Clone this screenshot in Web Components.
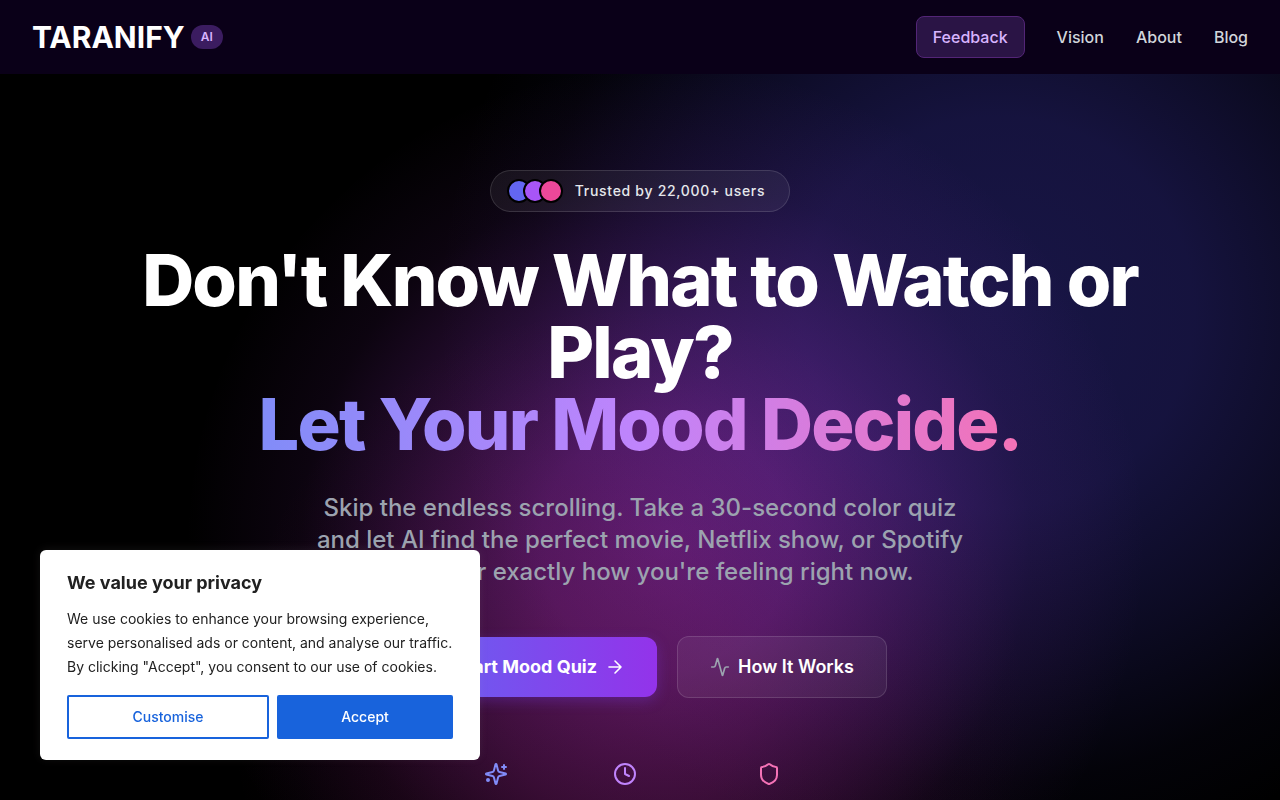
<!DOCTYPE html>
<html lang="en">
<head>
<meta charset="utf-8">
<meta name="viewport" content="width=device-width, initial-scale=1">
<title>Taranify</title>
<style>
  body {
    margin: 0;
    background: #000;
    color: #fff;
    font-family: Inter, "Liberation Sans", sans-serif;
  }
</style>
</head>
<body>
<taranify-page>
  <site-header slot="header">
    <nav-link href="#feedback" highlight>Feedback</nav-link>
    <nav-link href="#vision">Vision</nav-link>
    <nav-link href="#about">About</nav-link>
    <nav-link href="#blog">Blog</nav-link>
  </site-header>
  <hero-section>
    <trust-badge slot="badge">Trusted by 22,000+ users</trust-badge>
    <span slot="title">Don't Know What to Watch or Play?</span>
    <span slot="accent">Let Your Mood Decide.</span>
    <span slot="lead">Skip the endless scrolling. Take a 30-second color quiz and let AI find the perfect movie, Netflix show, or Spotify playlist for exactly how you're feeling right now.</span>
    <cta-button slot="actions" primary>Start Mood Quiz</cta-button>
    <cta-button slot="actions">How It Works</cta-button>
    <feature-icons slot="features"></feature-icons>
  </hero-section>
</taranify-page>
<cookie-banner>
  <span slot="title">We value your privacy</span>
  We use cookies to enhance your browsing experience, serve personalised ads or content, and analyse our traffic. By clicking "Accept", you consent to our use of cookies.
</cookie-banner>

<script>
class TaranifyPage extends HTMLElement {
  constructor() {
    super();
    this.attachShadow({ mode: "open" });
    this.shadowRoot.innerHTML = `
      <style>
        :host {
          display: flex;
          flex-direction: column;
          height: 100vh;
          overflow: hidden;
          /* pink, purple and indigo glows */
          background:
            radial-gradient(circle 400px at 49% 88%, rgba(190, 24, 110, 0.17) 0%, rgba(190, 24, 110, 0.15) 30%, rgba(190, 24, 110, 0.08) 60%, rgba(190, 24, 110, 0.02) 84%, transparent 100%),
            radial-gradient(circle 480px at 52% 68%, rgba(172, 56, 220, 0.46) 0%, rgba(172, 56, 220, 0.4) 26%, rgba(172, 56, 220, 0.24) 50%, rgba(172, 56, 220, 0.07) 76%, transparent 100%),
            radial-gradient(circle 560px at 78% 39%, rgba(79, 70, 229, 0.3) 0%, rgba(79, 70, 229, 0.27) 35%, rgba(79, 70, 229, 0.15) 62%, rgba(79, 70, 229, 0.04) 84%, transparent 100%),
            #000;
        }

        main {
          flex: 1;
        }
      </style>

      <slot name="header"></slot>
      <main><slot></slot></main>
    `;
  }
}

class SiteHeader extends HTMLElement {
  constructor() {
    super();
    this.attachShadow({ mode: "open" });
    this.shadowRoot.innerHTML = `
      <style>
        :host {
          display: block;
          background: #0a0018;
        }

        header {
          display: flex;
          align-items: center;
          justify-content: space-between;
          padding: 16px 32px;
        }

        .brand {
          display: flex;
          align-items: center;
          gap: 6px;
          color: #fff;
          text-decoration: none;
          font-size: 30px;
          font-weight: 700;
          line-height: 36px;
        }

        .tag {
          padding: 4px 10px;
          border-radius: 12px;
          background: #3b1c60;
          color: #d8b4fe;
          font-size: 12px;
          font-weight: 600;
          line-height: 16px;
        }

        nav {
          display: flex;
          align-items: center;
          gap: 32px;
        }
      </style>

      <header>
        <a class="brand" href="#">TARANIFY <span class="tag">AI</span></a>
        <nav><slot></slot></nav>
      </header>
    `;
  }
}

class NavLink extends HTMLElement {
  constructor() {
    super();
    this.attachShadow({ mode: "open" });
    this.shadowRoot.innerHTML = `
      <style>
        :host {
          display: block;
        }

        a {
          display: block;
          color: #d1d5db;
          font-size: 16px;
          font-weight: 500;
          line-height: 24px;
          text-decoration: none;
        }

        :host([highlight]) a {
          padding: 8px 16px;
          border: 1px solid #532577;
          border-radius: 8px;
          background: #2a1445;
          color: #d8b4fe;
        }
      </style>

      <a href="${this.getAttribute("href")}"><slot></slot></a>
    `;
  }
}

class TrustBadge extends HTMLElement {
  constructor() {
    super();
    this.attachShadow({ mode: "open" });
    this.shadowRoot.innerHTML = `
      <style>
        :host {
          display: inline-flex;
          align-items: center;
          gap: 12px;
          padding: 8px 24px 8px 16px;
          border: 1px solid rgba(255, 255, 255, 0.13);
          border-radius: 21px;
          background: rgba(255, 255, 255, 0.06);
          color: #e5e7eb;
          font-size: 14px;
          font-weight: 500;
          line-height: 20px;
          letter-spacing: 0.05em;
        }

        .faces {
          display: flex;
        }

        i {
          width: 20px;
          height: 20px;
          border: 2px solid #000;
          border-radius: 50%;
          background: #6366f1;
        }

        i + i {
          margin-left: -8px;
          background: #a855f7;
        }

        i + i + i {
          background: #ec4899;
        }
      </style>

      <span class="faces"><i></i><i></i><i></i></span>
      <span><slot></slot></span>
    `;
  }
}

class HeroSection extends HTMLElement {
  constructor() {
    super();
    this.attachShadow({ mode: "open" });
    this.shadowRoot.innerHTML = `
      <style>
        :host {
          display: block;
          padding: 96px 24px 0;
          text-align: center;
        }

        .inner {
          display: flex;
          flex-direction: column;
          align-items: center;
          max-width: 1024px;
          margin: 0 auto;
        }

        h1 {
          margin: 32px 0;
          font-size: 72px;
          font-weight: 800;
          line-height: 72px;
          letter-spacing: -0.025em;
        }

        .accent {
          display: block;
          width: fit-content;
          margin: 0 auto;
          background: linear-gradient(to right, #818cf8, #c084fc, #f472b6);
          -webkit-background-clip: text;
          background-clip: text;
          color: transparent;
        }

        p {
          max-width: 672px;
          margin: 0 0 48px;
          color: #9ca3af;
          font-size: 24px;
          font-weight: 500;
          line-height: 32px;
        }

        .actions {
          display: flex;
          align-items: center;
          gap: 20px;
          margin-bottom: 64px;
        }
      </style>

      <div class="inner">
        <slot name="badge"></slot>
        <h1><slot name="title"></slot><span class="accent"><slot name="accent"></slot></span></h1>
        <p><slot name="lead"></slot></p>
        <div class="actions"><slot name="actions"></slot></div>
        <slot name="features"></slot>
      </div>
    `;
  }
}

class CtaButton extends HTMLElement {
  constructor() {
    super();
    const primary = this.hasAttribute("primary");
    this.attachShadow({ mode: "open" });
    this.shadowRoot.innerHTML = `
      <style>
        :host {
          display: block;
        }

        button {
          display: flex;
          align-items: center;
          gap: 8px;
          min-height: 60px;
          padding: 16px 32px;
          border: 1px solid rgba(255, 255, 255, 0.13);
          border-radius: 12px;
          background: rgba(255, 255, 255, 0.06);
          color: #fff;
          font: 600 18px/28px Inter, "Liberation Sans", sans-serif;
          cursor: pointer;
        }

        :host([primary]) button {
          justify-content: flex-end;
          min-width: 264px;
          border: 0;
          background: linear-gradient(to right, #6366f1, #9333ea);
          box-shadow: 0 4px 14px rgba(124, 58, 237, 0.3);
          font-weight: 700;
        }

        svg {
          width: 20px;
          height: 20px;
          fill: none;
          stroke: #9ca3af;
          stroke-width: 2;
          stroke-linecap: round;
          stroke-linejoin: round;
        }

        :host([primary]) svg {
          stroke: #fff;
          stroke-width: 1.6;
        }
      </style>

      <button type="button">
        ${primary ? "" : `<svg viewBox="0 0 24 24"><path d="M22 12h-2.48a2 2 0 0 0-1.93 1.46l-2.35 8.36a.25.25 0 0 1-.48 0L9.24 2.18a.25.25 0 0 0-.48 0l-2.35 8.36A2 2 0 0 1 4.49 12H2"/></svg>`}
        <span><slot></slot></span>
        ${primary ? `<svg viewBox="0 0 20 20"><path d="M4 10h12M10 4l6 6-6 6"/></svg>` : ""}
      </button>
    `;
  }
}

class FeatureIcons extends HTMLElement {
  constructor() {
    super();
    this.attachShadow({ mode: "open" });
    this.shadowRoot.innerHTML = `
      <style>
        :host {
          display: grid;
          grid-template-columns: 81px 81px 111px;
          gap: 48px;
          justify-items: center;
        }

        svg {
          width: 24px;
          height: 24px;
          fill: none;
          stroke-width: 2;
          stroke-linecap: round;
          stroke-linejoin: round;
        }
      </style>

      <svg viewBox="0 0 24 24" stroke="#818cf8"><path d="M9.937 15.5A2 2 0 0 0 8.5 14.063l-6.135-1.582a.5.5 0 0 1 0-.962L8.5 9.936A2 2 0 0 0 9.937 8.5l1.582-6.135a.5.5 0 0 1 .963 0L14.063 8.5A2 2 0 0 0 15.5 9.937l6.135 1.581a.5.5 0 0 1 0 .964L15.5 14.063a2 2 0 0 0-1.437 1.437l-1.582 6.135a.5.5 0 0 1-.963 0z"/><path d="M20 3v4M22 5h-4"/><circle cx="4" cy="18" r="1"/></svg>
      <svg viewBox="0 0 24 24" stroke="#c084fc"><circle cx="12" cy="12" r="10"/><path d="M12 6v6l4 2"/></svg>
      <svg viewBox="0 0 24 24" stroke="#f472b6"><path d="M20 13c0 5-3.500 7.500-7.660 8.950a1 1 0 0 1-.67-.01C7.500 20.500 4 18 4 13V6a1 1 0 0 1 1-1c2 0 4.500-1.200 6.240-2.720a1.170 1.170 0 0 1 1.520 0C14.510 3.810 17 5 19 5a1 1 0 0 1 1 1z"/></svg>
    `;
  }
}

class CookieBanner extends HTMLElement {
  constructor() {
    super();
    this.attachShadow({ mode: "open" });
    this.shadowRoot.innerHTML = `
      <style>
        :host {
          position: fixed;
          left: 40px;
          bottom: 40px;
          box-sizing: border-box;
          width: 440px;
          max-width: calc(100vw - 80px);
          padding: 21px 27px;
          border-radius: 6px;
          background: #fff;
          box-shadow: 0 -1px 10px rgba(172, 171, 171, 0.1);
          color: #212121;
        }

        h2 {
          margin: 0 0 12px;
          font-size: 18px;
          font-weight: 700;
          line-height: 24px;
        }

        p {
          margin: 0 0 16px;
          font-size: 14px;
          line-height: 24px;
        }

        .buttons {
          display: flex;
          gap: 8px;
        }

        button {
          flex: 1 1 176px;
          height: 44px;
          border: 2px solid #1863dc;
          border-radius: 2px;
          background: #1863dc;
          color: #fff;
          font: 500 14px/24px Inter, "Liberation Sans", sans-serif;
          cursor: pointer;
        }

        .outline {
          flex-basis: 202px;
          background: transparent;
          color: #1863dc;
        }
      </style>

      <h2><slot name="title"></slot></h2>
      <p><slot></slot></p>
      <div class="buttons">
        <button type="button" class="outline">Customise</button>
        <button type="button">Accept</button>
      </div>
    `;
  }
}

customElements.define("taranify-page", TaranifyPage);
customElements.define("site-header", SiteHeader);
customElements.define("nav-link", NavLink);
customElements.define("trust-badge", TrustBadge);
customElements.define("hero-section", HeroSection);
customElements.define("cta-button", CtaButton);
customElements.define("feature-icons", FeatureIcons);
customElements.define("cookie-banner", CookieBanner);
</script>
</body>
</html>
